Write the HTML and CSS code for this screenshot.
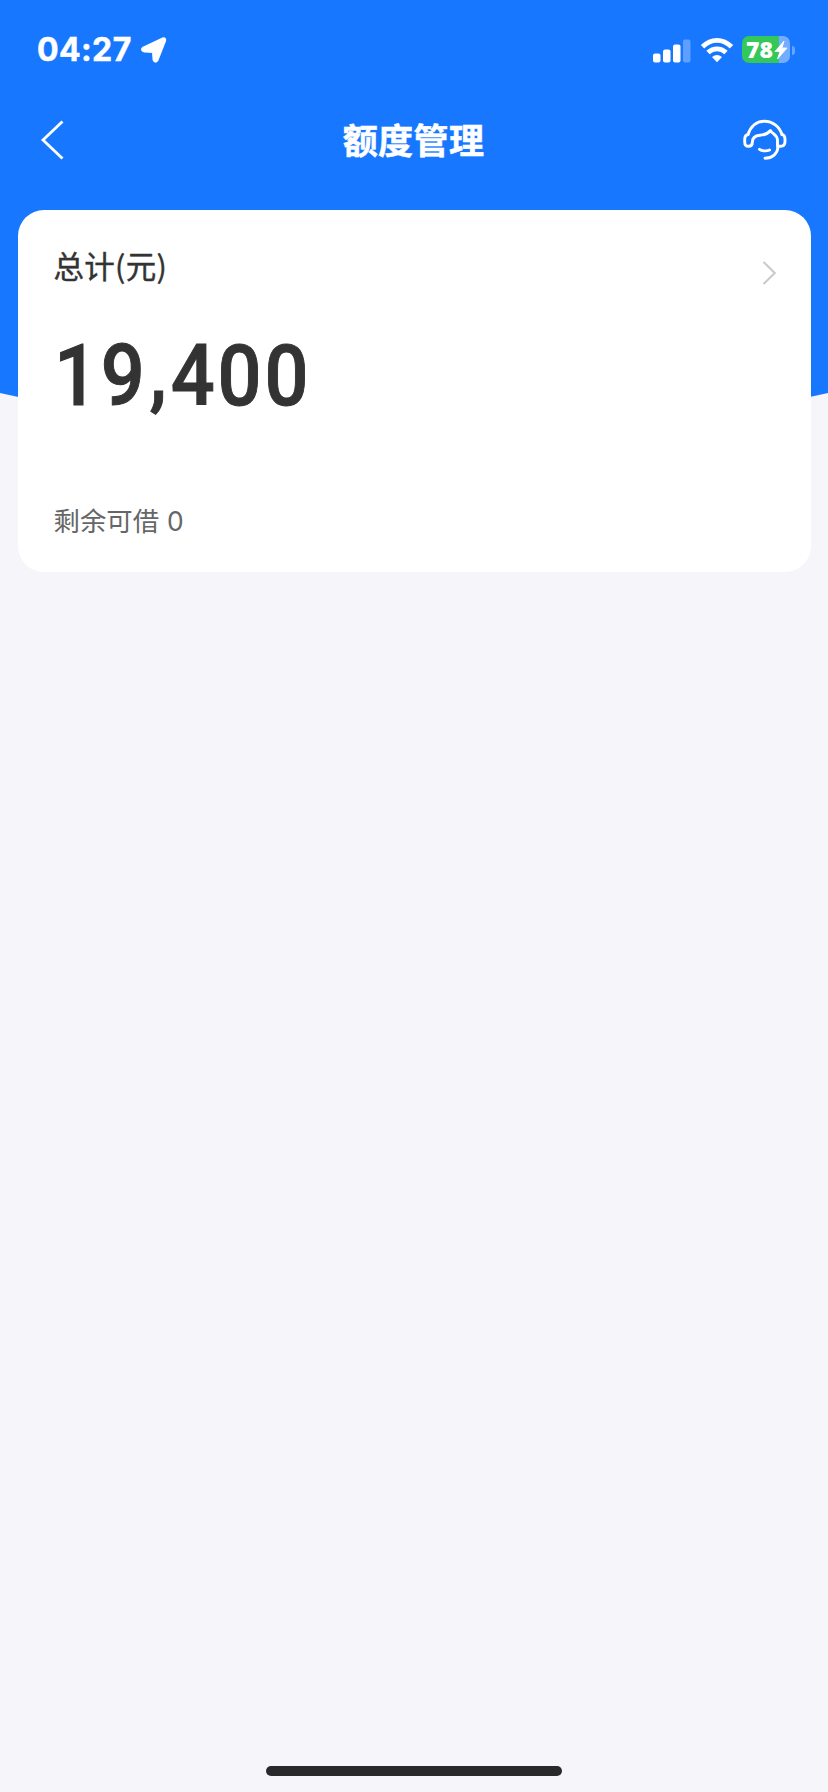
FILE: index.html
```html
<!DOCTYPE html>
<html lang="zh-CN">
<head>
<meta charset="utf-8">
<title>额度管理</title>
<link rel="stylesheet" href="styles.css">
</head>
<body>
<div class="screen">
  <svg class="backdrop" width="828" height="420" viewBox="0 0 828 420"><path d="M0 0H828V393Q414 487 0 393Z" fill="#1777ff"/></svg>
  <header class="status">
    <span class="time">04:27</span>
    <svg class="location" width="28" height="28" viewBox="0 0 28 28"><path d="M3.500 12 22.500 3Q25.500 2 24.500 5L17 24Q15 26.500 14 23.500L13.500 15.500 4.500 15Q1 14 3.500 12Z" fill="#fff" stroke="#fff" stroke-width="3" stroke-linejoin="round"/></svg>
    <svg class="signal" width="38" height="24" viewBox="0 0 38 24" fill="#fff"><rect x="0" y="14.500" width="7.500" height="9" rx="2"/><rect x="10" y="10.500" width="7.500" height="13" rx="2"/><rect x="20" y="5.500" width="7.500" height="18" rx="2"/><rect x="30" y="0.500" width="7.500" height="23" rx="2" opacity=".3"/></svg>
    <svg class="wifi" width="34" height="26" viewBox="0 0 34 26"><g fill="none" stroke="#fff" stroke-width="4.800"><path d="M2.500 9.800Q9 3.300 17 3.300T31.500 9.800"/><path d="M8 15.600Q12 11.800 17 11.800T26 15.600"/></g><path d="M12 20Q17 15.800 22 20L17 25.200Z" fill="#fff"/></svg>
    <div class="battery">
      <span class="level">78</span>
      <svg class="bolt" width="14" height="20" viewBox="0 0 14 20"><path d="M10 1 1 11.500H6L3.500 19 13 8H8Z" fill="#fff" stroke="#fff" stroke-width=".8"/></svg>
    </div>
    <span class="battery-tip"></span>
  </header>
  <nav class="nav">
    <svg class="back" width="24" height="40" viewBox="0 0 24 40"><path d="M22.500 1.500 3 20 22.500 38.500" fill="none" stroke="#fff" stroke-width="2.800"/></svg>
    <h1 class="title">额度管理</h1>
    <svg class="support" width="44" height="42" viewBox="0 0 44 42" fill="none" stroke="#fff" stroke-width="2.900" stroke-linecap="round" stroke-linejoin="round"><path d="M5 15.500C7.500 7.500 13.500 2.200 21.500 2.200S36.500 7.500 39 15.500"/><path d="M5 15.500C2.500 16 1.700 17.500 1.700 20.500V23C1.700 26 3 27.300 5.500 27.300S9.300 26 9.300 23.500C9.300 18.500 12.500 16.500 17 16.200C21.500 16 25 14.500 27.500 11.500C29 15 34.500 15.500 34.500 21.500V27.300H37.500C41 27.300 42 25.500 42 22.500V20.500C42 17.500 41.500 16 39 15.500"/><path d="M35 28C34.500 34.500 29.500 39.300 22 39.300M16.500 30.300C19 32.300 24 32.300 26.500 31"/></svg>
  </nav>
  <main class="card">
    <div class="card-head">
      <span class="label">总计(元)</span>
      <svg class="arrow" width="15" height="24" viewBox="0 0 15 24"><path d="M1.500 1 12.800 12 1.500 23" fill="none" stroke="#c9c9c9" stroke-width="2"/></svg>
    </div>
    <div class="amount">19<span class="comma">,</span>400</div>
    <div class="remaining">剩余可借 <span class="zero">0</span></div>
  </main>
  <div class="home-indicator"></div>
</div>
</body>
</html>
```
FILE: styles.css
```css
* { box-sizing: border-box; }
body { margin: 0; background: #f5f5fa; }
.screen {
  position: relative;
  display: flex;
  flex-direction: column;
  width: 828px;
  height: 1792px;
  overflow: hidden;
  background: #f5f5fa;
  font-family: "Noto Sans CJK SC", sans-serif;
}
.backdrop { position: absolute; top: 0; left: 0; }
.status, .nav, .card, .home-indicator { position: relative; flex: none; }
.status {
  display: flex;
  align-items: center;
  height: 100px;
  padding: 0 33px 0 37px;
  color: #fff;
}
.time { width: 94px; font: 700 32px/40px Inter, sans-serif; letter-spacing: .4px; -webkit-text-stroke: .5px #fff; white-space: nowrap; }
.location { margin-left: 9px; }
.signal { margin: 1px 0 0 auto; }
.wifi { margin-left: 9px; }
.battery {
  display: flex;
  align-items: center;
  width: 48px;
  height: 27px;
  margin: -1px 0 0 8px;
  padding-left: 4px;
  border-radius: 7px;
  background: linear-gradient(90deg, #34c759 37px, #74adff 37px);
}
.level { width: 28px; font: 800 23px/27px "Open Sans", sans-serif; }
.bolt { flex: none; }
.battery-tip { width: 3px; height: 9px; margin-left: 2px; border-radius: 0 4px 4px 0; background: #65a4ff; }
.nav {
  display: flex;
  align-items: center;
  justify-content: space-between;
  height: 80px;
  padding: 0 41px 0 40px;
}
.title { margin: -3px 0 0; padding-left: 20px; color: #fff; font-size: 35px; font-weight: 700; line-height: 50px; letter-spacing: .4px; -webkit-text-stroke: .5px #fff; }
.card {
  width: 793px;
  height: 362px;
  margin: 30px 0 0 17.5px;
  padding: 30px 34px 0 36px;
  border-radius: 26px;
  background: #fff;
}
.card-head { display: flex; justify-content: space-between; height: 50px; }
.label { color: #333; font-size: 30.5px; font-weight: 400; line-height: 50px; letter-spacing: .3px; -webkit-text-stroke: .4px #333; }
.arrow { margin-top: 21px; }
.amount { width: 300px; margin-top: 36px; color: #333; font: 500 86px/100px Roboto, sans-serif; letter-spacing: 3.2px; transform: scaleX(.9); transform-origin: left; -webkit-text-stroke: 1px #333; white-space: nowrap; }
.comma { display: inline-block; padding: 0 1px 0 2px; transform: translateY(-4px); }
.remaining { margin-top: 74px; color: #666; font-size: 26.4px; line-height: 40px; }
.zero { margin-left: 2px; font-family: Inter, sans-serif; }
.home-indicator { width: 296px; height: 10px; margin: auto 0 16px 266px; border-radius: 5px; background: #29292c; }
```
